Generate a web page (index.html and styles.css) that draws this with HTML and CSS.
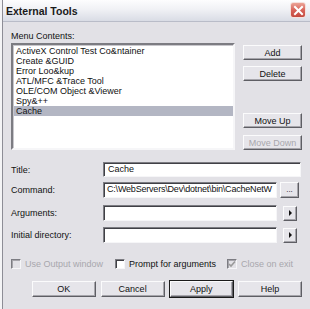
FILE: index.html
```html
<!DOCTYPE html>
<html lang="en">
<head>
    <meta charset="UTF-8">
    <title>External Tools</title>
    <link rel="stylesheet" href="styles.css">
</head>
<body>
    <div class="window">
        <div class="titlebar">
            <span class="title">External Tools</span>
            <div class="close-btn">
                <svg width="11" height="11" viewBox="0 0 11 11">
                    <path d="M2 2 L9 9 M9 2 L2 9" stroke="#fff" stroke-width="2" stroke-linecap="square"/>
                </svg>
            </div>
        </div>

        <div class="content">
            <div class="top">
                <div class="list-col">
                    <div class="label">Menu Contents:</div>
                    <div class="listbox">
                        <div class="item">ActiveX Control Test Co&amp;ntainer</div>
                        <div class="item">Create &amp;GUID</div>
                        <div class="item">Error Loo&amp;kup</div>
                        <div class="item">ATL/MFC &amp;Trace Tool</div>
                        <div class="item">OLE/COM Object &amp;Viewer</div>
                        <div class="item">Spy&amp;++</div>
                        <div class="item selected">Cache</div>
                    </div>
                </div>
                <div class="btn-col">
                    <button class="btn btn-add">Add</button>
                    <button class="btn btn-delete">Delete</button>
                    <button class="btn btn-up">Move Up</button>
                    <button class="btn btn-down" disabled>Move Down</button>
                </div>
            </div>

            <div class="field row-title">
                <span class="field-label">Title:</span>
                <div class="input">Cache</div>
            </div>
            <div class="field row-command">
                <span class="field-label">Command:</span>
                <div class="input short path">C:\WebServers\Dev\dotnet\bin\CacheNetW</div>
                <button class="btn btn-browse">...</button>
            </div>
            <div class="field row-args">
                <span class="field-label">Arguments:</span>
                <div class="input short"></div>
                <button class="btn btn-arrow"><span class="tri"></span></button>
            </div>
            <div class="field row-dir">
                <span class="field-label">Initial directory:</span>
                <div class="input short"></div>
                <button class="btn btn-arrow"><span class="tri"></span></button>
            </div>

            <div class="checks">
                <label class="check check-output disabled"><span class="box"></span>Use Output window</label>
                <label class="check check-prompt"><span class="box"></span>Prompt for arguments</label>
                <label class="check check-close disabled"><span class="box checked">
                    <svg width="8" height="8" viewBox="0 0 8 8"><path d="M1 4 L3 6 L7 1.5" stroke="#9a9a9a" stroke-width="1.6" fill="none"/></svg>
                </span>Close on exit</label>
            </div>

            <div class="bottom">
                <button class="btn btn-big">OK</button>
                <button class="btn btn-big">Cancel</button>
                <button class="btn btn-big default">Apply</button>
                <button class="btn btn-big">Help</button>
            </div>
        </div>
    </div>
</body>
</html>
```

FILE: styles.css
```css
* {
    margin: 0;
    padding: 0;
    box-sizing: border-box;
    font-family: 'Liberation Sans', Arial, sans-serif;
}
body {
    background: #e2e1e6;
    width: 310px;
    height: 309px;
    overflow: hidden;
}
.window {
    width: 310px;
    height: 309px;
    background: #e2e1e6;
    border-left: 2px solid #f4f4f6;
    position: relative;
}
.window::before {
    content: "";
    position: absolute;
    left: 0;
    top: 0;
    bottom: 0;
    width: 1px;
    background: #8d8d96;
}
.titlebar {
    height: 22px;
    display: flex;
    align-items: center;
    justify-content: space-between;
    padding: 0 4px 0 4px;
    background: linear-gradient(to bottom, #fdfdfe 0%, #f0f1f5 45%, #d9dce5 100%);
    border-bottom: 1px solid #b9bcc8;
}
.title {
    font-weight: bold;
    font-size: 10.5px;
    color: #1a1a1a;
}
.close-btn {
    width: 16px;
    height: 16px;
    border-radius: 3px;
    border: 1px solid #f5e0dc;
    background: linear-gradient(to bottom, #eba396 0%, #d8645a 50%, #c4493e 100%);
    display: flex;
    align-items: center;
    justify-content: center;
    margin-top: -1px;
}
.content {
    padding: 7px 8px 0 9px;
    font-size: 9px;
    color: #111;
}
.top {
    display: flex;
}
.list-col {
    width: 224px;
}
.label {
    height: 14px;
    line-height: 14px;
}
.listbox {
    height: 107px;
    background: #fff;
    border-style: solid;
    border-width: 2px;
    border-color: #7c7c82 #f6f6f8 #f6f6f8 #7c7c82;
    box-shadow: inset 1px 1px 0 #c8c7cc;
    padding: 1px 0 0 1px;
}
.item {
    height: 10px;
    line-height: 10px;
    padding-left: 2px;
    white-space: nowrap;
}
.item.selected {
    background: #b3b6c3;
}
.btn-col {
    width: 59px;
    margin-left: 8px;
    display: flex;
    flex-direction: column;
}
.btn {
    background: #e6e5ea;
    border-style: solid;
    border-width: 1px;
    border-color: #fbfbfc #5e5e64 #5e5e64 #fbfbfc;
    box-shadow: inset -1px -1px 0 #a6a5ab;
    font-size: 9px;
    color: #111;
    font-family: 'Liberation Sans', Arial, sans-serif;
    height: 15px;
    line-height: 12px;
    padding: 0;
}
.btn:disabled {
    color: #a8a7ad;
}
.btn-add {
    margin-top: 16px;
}
.btn-delete {
    margin-top: 6px;
}
.btn-up {
    margin-top: 32px;
}
.btn-down {
    margin-top: 7px;
}
.field {
    display: flex;
    align-items: center;
}
.field-label {
    width: 92px;
    flex-shrink: 0;
}
.input {
    flex: 1;
    height: 100%;
    background: #fff;
    border-style: solid;
    border-width: 1px;
    border-color: #7c7c82 #f6f6f8 #f6f6f8 #7c7c82;
    box-shadow: inset 1px 1px 0 #404046;
    padding: 0 4px;
    line-height: 13px;
    white-space: nowrap;
    overflow: hidden;
}
.input.short {
    flex: none;
    width: 174px;
}
.input.path {
    padding: 0 2px 0 3px;
    letter-spacing: -0.2px;
}
.row-title {
    margin-top: 12px;
    height: 15px;
    padding-right: 1px;
}
.row-command {
    margin-top: 5px;
    height: 16px;
}
.row-args {
    margin-top: 7px;
    height: 16px;
}
.row-dir {
    margin-top: 6px;
    height: 16px;
}
.btn-browse {
    width: 19px;
    height: 16px;
    margin-left: 3px;
    line-height: 12px;
    font-size: 8px;
}
.btn-arrow {
    width: 14px;
    height: 15px;
    margin-left: 6px;
    display: flex;
    align-items: center;
    justify-content: center;
}
.tri {
    width: 0;
    height: 0;
    border-top: 3px solid transparent;
    border-bottom: 3px solid transparent;
    border-left: 3px solid #111;
}
.checks {
    display: flex;
    align-items: center;
    margin-top: 16px;
    height: 10px;
}
.check {
    display: flex;
    align-items: center;
    white-space: nowrap;
}
.check.disabled {
    color: #a8a7ad;
}
.box {
    width: 10px;
    height: 10px;
    background: #fff;
    border-style: solid;
    border-width: 1px;
    border-color: #7c7c82 #f6f6f8 #f6f6f8 #7c7c82;
    box-shadow: inset 1px 1px 0 #404046;
    margin-right: 4px;
    display: flex;
    align-items: center;
    justify-content: center;
}
.check.disabled .box {
    background: #e2e1e6;
    box-shadow: inset 1px 1px 0 #a6a5ab;
}
.check-output {
    width: 104px;
}
.check-prompt {
    width: 112px;
}
.bottom {
    display: flex;
    gap: 5px;
    margin-top: 12px;
    margin-left: 21px;
}
.btn-big {
    width: 64px;
    height: 16px;
}
.btn-big.default {
    outline: 1px solid #1a1a1a;
    outline-offset: 0;
}
```
